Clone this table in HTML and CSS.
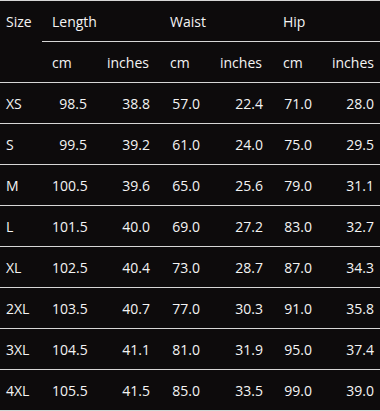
FILE: index.html
```html
<!DOCTYPE html>
<html>
<head>
<meta charset="utf-8">
<link rel="stylesheet" href="styles.css">
</head>
<body>
<table class="size-table">
  <colgroup>
    <col class="c-size">
    <col class="c-cm">
    <col class="c-in">
    <col class="c-cm2">
    <col class="c-in">
    <col class="c-cm3">
    <col class="c-in-last">
  </colgroup>
  <thead>
    <tr class="group-row">
      <th class="first">Size</th>
      <th colspan="2" class="group">Length</th>
      <th colspan="2" class="group">Waist</th>
      <th colspan="2" class="group last">Hip</th>
    </tr>
    <tr class="unit-row">
      <th class="first"></th>
      <th>cm</th>
      <th>inches</th>
      <th>cm</th>
      <th>inches</th>
      <th>cm</th>
      <th class="last">inches</th>
    </tr>
  </thead>
  <tbody>
    <tr><td class="first">XS</td><td>98.5</td><td>38.8</td><td>57.0</td><td>22.4</td><td>71.0</td><td class="last">28.0</td></tr>
    <tr><td class="first">S</td><td>99.5</td><td>39.2</td><td>61.0</td><td>24.0</td><td>75.0</td><td class="last">29.5</td></tr>
    <tr><td class="first">M</td><td>100.5</td><td>39.6</td><td>65.0</td><td>25.6</td><td>79.0</td><td class="last">31.1</td></tr>
    <tr><td class="first">L</td><td>101.5</td><td>40.0</td><td>69.0</td><td>27.2</td><td>83.0</td><td class="last">32.7</td></tr>
    <tr><td class="first">XL</td><td>102.5</td><td>40.4</td><td>73.0</td><td>28.7</td><td>87.0</td><td class="last">34.3</td></tr>
    <tr><td class="first">2XL</td><td>103.5</td><td>40.7</td><td>77.0</td><td>30.3</td><td>91.0</td><td class="last">35.8</td></tr>
    <tr><td class="first">3XL</td><td>104.5</td><td>41.1</td><td>81.0</td><td>31.9</td><td>95.0</td><td class="last">37.4</td></tr>
    <tr><td class="first">4XL</td><td>105.5</td><td>41.5</td><td>85.0</td><td>33.5</td><td>99.0</td><td class="last">39.0</td></tr>
  </tbody>
</table>
</body>
</html>
```
FILE: styles.css
```css
html, body {
  margin: 0;
  padding: 0;
  background: #0d0b0c;
  overflow: hidden;
}

.size-table {
  width: 380px;
  table-layout: fixed;
  border-collapse: collapse;
  border-top: 1px solid #d6d6d6;
  font-family: "Open Sans", "DejaVu Sans", sans-serif;
  font-size: 14px;
  color: #f4f4f4;
}

.c-size { width: 42px; }
.c-cm { width: 55px; }
.c-in { width: 63px; }
.c-cm2 { width: 50px; }
.c-cm3 { width: 49px; }
.c-in-last { width: 58px; }

.size-table th,
.size-table td {
  height: 40px;
  padding: 0 10px;
  font-weight: normal;
  vertical-align: middle;
  white-space: nowrap;
  border-bottom: 1px solid #d6d6d6;
}

.size-table th {
  text-align: left;
}

.size-table td {
  text-align: right;
}

.size-table .first {
  padding-left: 6px;
  padding-right: 0;
  text-align: left;
}

.size-table .last {
  padding-right: 6px;
}

.group-row th.first {
  border-bottom: none;
}
```
